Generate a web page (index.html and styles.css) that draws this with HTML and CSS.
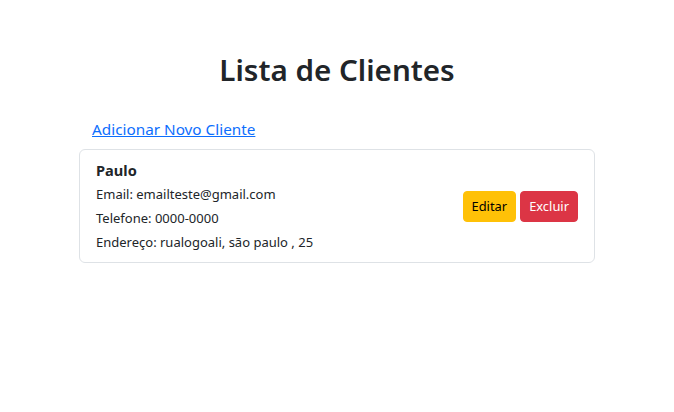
FILE: index.html
```html
<!DOCTYPE html>
<html lang="pt-BR">
<head>
<meta charset="utf-8">
<title>Lista de Clientes</title>
<link rel="stylesheet" href="styles.css">
</head>
<body>
<div class="container">
  <h1 class="title">Lista de Clientes</h1>
  <div class="actions">
    <a href="#" class="add-link">Adicionar Novo Cliente</a>
  </div>
  <ul class="client-list">
    <li class="client-card">
      <div class="client-info">
        <strong class="client-name">Paulo</strong>
        <div class="client-line">Email: emailteste@gmail.com</div>
        <div class="client-line">Telefone: 0000-0000</div>
        <div class="client-line">Endereço: rualogoali, são paulo , 25</div>
      </div>
      <div class="client-buttons">
        <a href="#" class="btn btn-warning">Editar</a>
        <button type="button" class="btn btn-danger">Excluir</button>
      </div>
    </li>
  </ul>
</div>
</body>
</html>
```

FILE: styles.css
```css
* { box-sizing: border-box; }
html, body { margin: 0; padding: 0; background: #fff; }
body {
  font-family: "Noto Sans", "Open Sans", sans-serif;
  color: #212529;
  font-size: 15.3px;
  line-height: 1.5;
}
.container {
  width: 540px;
  margin: 0 auto;
  padding: 0 12px;
}
.title {
  margin: 0;
  padding-top: 51px;
  font-size: 29.6px;
  line-height: 38px;
  font-weight: 600;
  text-align: center;
}
.actions {
  margin-top: 28px;
  padding-left: 13px;
  line-height: 24px;
}
.add-link {
  color: #0d6efd;
  text-decoration: underline;
}
.client-list {
  list-style: none;
  margin: 8px 0 0;
  padding: 0;
}
.client-card {
  display: flex;
  align-items: center;
  justify-content: space-between;
  border: 1px solid #dee2e6;
  border-radius: 6px;
  padding: 8px 16px;
}
.client-name {
  display: block;
  font-size: 14.6px;
  line-height: 24px;
  font-weight: 700;
}
.client-line {
  font-size: 13px;
  line-height: 24px;
}
.client-buttons {
  display: flex;
  gap: 4px;
}
.btn {
  display: inline-block;
  font-family: inherit;
  font-size: 12.9px;
  line-height: 21px;
  padding: 4px 8px;
  border: 1px solid transparent;
  border-radius: 4px;
  text-decoration: none;
  cursor: pointer;
}
.btn-warning {
  background: #ffc107;
  border-color: #ffc107;
  color: #000;
}
.btn-danger {
  background: #dc3545;
  border-color: #dc3545;
  color: #fff;
}
```
